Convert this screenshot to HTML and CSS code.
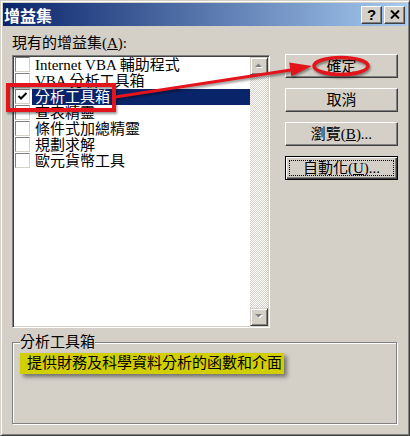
FILE: index.html
```html
<!DOCTYPE html>
<html lang="zh-Hant">
<head>
    <meta charset="UTF-8">
    <meta name="viewport" content="width=device-width, initial-scale=1.0">
    <title>增益集</title>
    <link rel="stylesheet" href="styles.css">
</head>
<body>
    <div class="window">
        <div class="titlebar">
            <span class="title">增益集</span>
            <button class="cap-btn help">?</button>
            <button class="cap-btn close">
                <svg width="10" height="9" viewBox="0 0 10 9"><path d="M1 0.5 L9 8.5 M9 0.5 L1 8.5" stroke="#000" stroke-width="2" fill="none"/></svg>
            </button>
        </div>
        <div class="dialog">
            <div class="top">
                <div class="left">
                    <div class="label">現有的增益集(<u>A</u>):</div>
                    <div class="listbox">
                        <ul class="items">
                            <li class="item"><span class="check"></span><span class="name">Internet VBA 輔助程式</span></li>
                            <li class="item"><span class="check"></span><span class="name">VBA 分析工具箱</span></li>
                            <li class="item selected">
                                <span class="check">
                                    <svg width="13" height="13" viewBox="0 0 13 13"><path d="M2.5 6 L5 8.5 L10.5 3" stroke="#000" stroke-width="2" fill="none"/></svg>
                                </span>
                                <span class="name">分析工具箱</span>
                            </li>
                            <li class="item"><span class="check"></span><span class="name">查表精靈</span></li>
                            <li class="item"><span class="check"></span><span class="name">條件式加總精靈</span></li>
                            <li class="item"><span class="check"></span><span class="name">規劃求解</span></li>
                            <li class="item"><span class="check"></span><span class="name">歐元貨幣工具</span></li>
                        </ul>
                        <div class="scrollbar">
                            <div class="sb-btn">
                                <svg width="9" height="6" viewBox="0 0 9 6"><polygon points="1,5 4.5,1.5 8,5" fill="#fff"/><polygon points="0,4 3.5,0.5 7,4" fill="#808080"/></svg>
                            </div>
                            <div class="track"></div>
                            <div class="sb-btn">
                                <svg width="9" height="6" viewBox="0 0 9 6"><polygon points="1,1 8,1 4.5,4.5" fill="#fff"/><polygon points="0,0 7,0 3.5,3.5" fill="#808080"/></svg>
                            </div>
                        </div>
                    </div>
                </div>
                <div class="buttons">
                    <button class="btn">確定</button>
                    <button class="btn">取消</button>
                    <button class="btn">瀏覽(<u>B</u>)...</button>
                    <button class="btn default"><span class="ring">自動化(<u>U</u>)...</span></button>
                </div>
            </div>
            <fieldset class="group">
                <legend>分析工具箱</legend>
                <div class="desc">提供財務及科學資料分析的函數和介面</div>
            </fieldset>
        </div>

        <!-- red callouts drawn over the dialog -->
        <svg class="marks" width="410" height="436" viewBox="0 0 410 436">
            <g fill="none" stroke="#e3141b">
                <rect x="8" y="85" width="106" height="25" stroke-width="4"/>
                <line x1="115" y1="97" x2="294" y2="69.5" stroke-width="3"/>
                <ellipse cx="341" cy="66" rx="27" ry="8.5" stroke-width="3.5"/>
            </g>
            <polygon points="312,66 289.2,62.5 291.4,76.3" fill="#e3141b"/>
        </svg>
    </div>
</body>
</html>
```

FILE: styles.css
```css
* {
    box-sizing: border-box;
}

body {
    margin: 0;
    font-family: "Liberation Serif", "Noto Sans CJK TC", serif;
    font-size: 15px;
    color: #000;
    background-color: #d4d0c8;
}

.window {
    position: relative;
    width: 410px;
    height: 436px;
    padding: 2px;
    display: flex;
    flex-direction: column;
    background-color: #d4d0c8;
    border: 1px solid;
    border-color: #d4d0c8 #404040 #404040 #d4d0c8;
    box-shadow: inset 1px 1px #fff, inset -1px -1px #808080;
}

.titlebar {
    height: 23px;
    display: flex;
    align-items: center;
    gap: 2px;
    padding: 0 2px 0 1px;
    background: linear-gradient(to right, #0a246a, #a6caf0);
}

.title {
    flex: 1;
    color: #fff;
    font: bold 16px "Noto Sans CJK TC", sans-serif;
    line-height: 16px;
}

.cap-btn {
    width: 21px;
    height: 18px;
    padding: 0;
    display: flex;
    align-items: center;
    justify-content: center;
    background-color: #d4d0c8;
    border: 1px solid;
    border-color: #fff #404040 #404040 #fff;
    box-shadow: inset -1px -1px #808080;
}

.help {
    font: bold 15px "Liberation Sans", sans-serif;
    line-height: 14px;
    color: #000;
}

.dialog {
    flex: 1;
    padding: 9px;
    display: flex;
    flex-direction: column;
}

.top {
    display: flex;
    gap: 15px;
}

.left {
    width: 258px;
}

.label {
    line-height: 16px;
    height: 16px;
    margin-bottom: 4px;
}

.listbox {
    height: 273px;
    padding: 1px;
    display: flex;
    background-color: #fff;
    border: 1px solid;
    border-color: #808080 #fff #fff #808080;
    box-shadow: inset 1px 1px #404040, inset -1px -1px #d4d0c8;
}

.items {
    flex: 1;
    list-style: none;
    margin: 0;
    padding: 0;
}

.item {
    height: 16px;
    display: flex;
    align-items: flex-start;
}

.check {
    width: 15px;
    height: 15px;
    margin-left: 1px;
    flex: none;
    display: flex;
    background-color: #fff;
    border: 1px solid;
    border-color: #808080 #d4d0c8 #d4d0c8 #808080;
}

.name {
    flex: 1;
    height: 16px;
    line-height: 16px;
    margin-left: 2px;
    padding-left: 3px;
    white-space: nowrap;
}

.item.selected .name {
    background-color: #0a246a;
    color: #fff;
}

.scrollbar {
    width: 18px;
    display: flex;
    flex-direction: column;
    background: repeating-conic-gradient(#fff 0 25%, #d4d0c8 0 50%) 0 0 / 2px 2px;
}

.sb-btn {
    height: 18px;
    display: flex;
    align-items: center;
    justify-content: center;
    background-color: #d4d0c8;
    border: 1px solid;
    border-color: #d4d0c8 #404040 #404040 #d4d0c8;
    box-shadow: inset 1px 1px #fff, inset -1px -1px #808080;
}

.track {
    flex: 1;
}

.buttons {
    width: 113px;
    margin-top: 19px;
    display: flex;
    flex-direction: column;
    gap: 10px;
}

.btn {
    height: 24px;
    padding: 0;
    display: flex;
    align-items: center;
    justify-content: center;
    font-family: inherit;
    font-size: 15px;
    line-height: 16px;
    color: #000;
    background-color: #d4d0c8;
    border: 1px solid;
    border-color: #fff #404040 #404040 #fff;
    box-shadow: inset -1px -1px #808080;
}

.btn.default {
    padding: 3px;
    align-items: stretch;
    border-color: #000;
    box-shadow: inset 1px 1px #fff, inset -1px -1px #404040, inset -2px -2px #808080;
}

.ring {
    flex: 1;
    display: flex;
    align-items: center;
    justify-content: center;
    border: 1px dotted #000;
}

.group {
    margin: 6px 0 0;
    width: 385px;
    height: 90px;
    min-width: 0;
    padding: 3px 0 0 7px;
    border: 1px solid #808080;
    box-shadow: inset 1px 1px #fff, 1px 1px #fff;
}

.group legend {
    padding: 0;
    line-height: 16px;
    background-color: #d4d0c8;
}

.desc {
    display: inline-block;
    padding: 2px 2px 3px 7px;
    line-height: 16px;
    background-color: #d2cf00;
    box-shadow: 3px 3px 4px rgba(0, 0, 0, 0.45);
}

.marks {
    position: absolute;
    left: -1px;
    top: -1px;
    pointer-events: none;
    filter: drop-shadow(1px 2px 1px rgba(0, 0, 0, 0.4));
}
```
